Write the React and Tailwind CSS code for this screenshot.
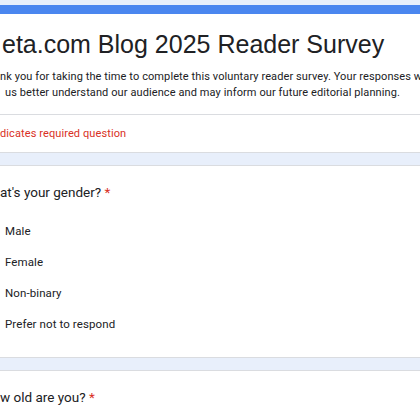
export default function App() {
  const options = ['Male', 'Female', 'Non-binary', 'Prefer not to respond']

  return (
    <div className="w-[420px] h-[420px] overflow-hidden bg-[#e8effb] font-['Roboto',sans-serif] text-[#202124]">
      <div className="h-[5px]" />
      <div className="h-[9px] bg-[#4a86ef]" />

      <div className="bg-white border-b border-[#dadce0]">
        <div className="pl-[2px] pt-[10px] h-[52px] font-['Liberation_Sans',Arial,sans-serif] text-[25px] leading-[40px] whitespace-nowrap">
          eta.com Blog 2025 Reader Survey
        </div>
        <div className="pt-[3px] pb-[13px] text-[11px] leading-[16px] tracking-[0.1px] whitespace-nowrap">
          <div>nk you for taking the time to complete this voluntary reader survey. Your responses will</div>
          <div className="pl-[5px]">us better understand our audience and may inform our future editorial planning.</div>
        </div>
        <div className="border-t border-[#dadce0] h-[38px] pt-[2px] flex items-center text-[11px] tracking-[0.1px] text-[#d93025]">
          dicates required question
        </div>
      </div>

      <div className="h-[12px]" />

      <div className="bg-white border-y border-[#dadce0] h-[193px]">
        <div className="pt-[16px] text-[13.5px] leading-[20px] whitespace-nowrap">
          at's your gender? <span className="text-[#d93025]">*</span>
        </div>
        <div className="pt-[14px] flex flex-col">
          {options.map((o) => (
            <div key={o} className="h-[31px] flex items-center pl-[5px] text-[11.5px] tracking-[0.1px]">
              {o}
            </div>
          ))}
        </div>
      </div>

      <div className="h-[12px]" />

      <div className="bg-white border-t border-[#dadce0] h-[60px]">
        <div className="pt-[16px] text-[13.5px] leading-[20px] whitespace-nowrap">
          w old are you? <span className="text-[#d93025]">*</span>
        </div>
      </div>
    </div>
  )
}
